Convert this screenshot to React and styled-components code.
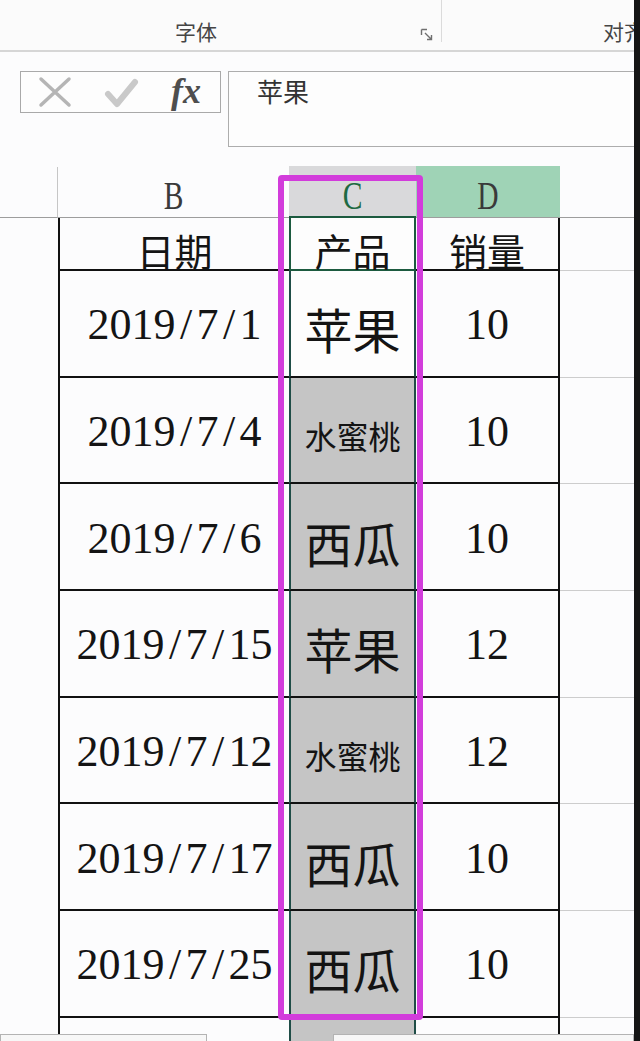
import React from 'react';
import styled, { createGlobalStyle } from 'styled-components';

const GlobalStyle = createGlobalStyle`
  html, body { margin: 0; padding: 0; background: #fcfcfd; }
  #root { width: 640px; height: 1041px; }
`;

const Page = styled.div`
  width: 640px;
  height: 1041px;
  display: flex;
  overflow: hidden;
  position: relative;
  background: #fcfcfd;
`;

const Main = styled.div`
  width: 634px;
  height: 100%;
  display: flex;
  flex-direction: column;
  overflow: hidden;
  flex: none;
`;

const EdgeBar = styled.div`
  width: 6px;
  background: #151515;
  flex: none;
`;

/* ---------- ribbon ---------- */
const Ribbon = styled.div`
  height: 50px;
  flex: none;
  display: flex;
  border-bottom: 2px solid #d6d6d6;
  background: #fbfbfb;
`;

const RibbonGroup = styled.div`
  width: ${p => (p.$width ? `${p.$width}px` : 'auto')};
  flex: ${p => (p.$width ? 'none' : '1')};
  display: flex;
  align-items: flex-end;
  box-sizing: border-box;
  padding-bottom: 8px;
  padding-left: ${p => p.$labelOffset}px;
  overflow: hidden;
`;

const GroupLabel = styled.span`
  font-family: "Noto Sans CJK SC", sans-serif;
  font-size: 21px;
  line-height: 21px;
  color: #454545;
  white-space: nowrap;
`;

const Launcher = styled.svg`
  margin-left: auto;
  margin-right: 7px;
  margin-bottom: 0px;
  flex: none;
`;

const Separator = styled.div`
  width: 1px;
  height: 42px;
  background: #dbdbdb;
  flex: none;
`;

/* ---------- formula bar ---------- */
const FormulaBar = styled.div`
  height: 114px;
  flex: none;
  box-sizing: border-box;
  display: flex;
  align-items: flex-start;
  gap: 7px;
  padding: 19px 0 0 20px;
`;

const EditButtons = styled.div`
  width: 201px;
  height: 42px;
  box-sizing: border-box;
  border: 1px solid #a9a9a9;
  background: #fdfdfd;
  display: flex;
  align-items: center;
  gap: 32px;
  padding-left: 17px;
  flex: none;
`;

const FxLabel = styled.span`
  font-family: "Liberation Serif", serif;
  font-style: italic;
  font-weight: 700;
  font-size: 36px;
  line-height: 36px;
  color: #4e4e4e;
  margin-top: -2px;
`;

const FormulaInput = styled.div`
  flex: 1;
  height: 76px;
  box-sizing: border-box;
  border: 1px solid #adadad;
  border-right: none;
  background: #fdfdfd;
  padding: 6px 0 0 28px;
  font-family: "Noto Sans CJK SC", sans-serif;
  font-size: 26px;
  line-height: 26px;
  color: #333;
`;

/* ---------- sheet ---------- */
const Sheet = styled.div`
  position: relative;
  flex: 1;
  display: grid;
  grid-template-columns: 58px 231px 127px 144px 1fr;
  grid-template-rows: 52px 53px repeat(7, 106.7px) 1fr;
`;

const Corner = styled.div`
  box-sizing: border-box;
  border-bottom: 1px solid #9d9d9d;
  border-right: 1px solid #c6c6c6;
  margin-top: 1px;
`;

const ColHeader = styled.div`
  box-sizing: border-box;
  display: flex;
  align-items: center;
  justify-content: center;
  padding-top: 8px;
  background: ${p => p.$bg || 'transparent'};
  border-bottom: 1px solid #9d9d9d;
  font-family: "Liberation Serif", serif;
  font-size: 41px;
  line-height: 41px;
  color: ${p => p.$color || '#3a3a3a'};
`;

const ColLetter = styled.span`
  display: inline-block;
  transform: scaleX(0.72);
`;

const Cell = styled.div`
  box-sizing: border-box;
  min-width: 0;
  display: flex;
  align-items: center;
  justify-content: center;
  padding-top: ${p => p.$nudge || 0}px;
  border-bottom: ${p => (p.$open ? 'none' : '2px solid #111')};
`;

const Gutter = styled.div``;

const DateCell = styled(Cell)`
  border-left: 2px solid #111;
`;

const ProductCell = styled(Cell)`
  background: ${p => (p.$shaded ? '#c5c5c5' : '#fdfdfd')};
  border-left: 2px solid #1f4d47;
  border-right: 2px solid #1f4d47;
  ${p =>
    p.$active &&
    `
    border: 2px solid #1c5a3f;
    margin-top: -2px;
  `}
`;

const QtyCell = styled(Cell)`
  border-right: 2px solid #111;
`;

const Blank = styled.div`
  box-sizing: border-box;
  border-bottom: ${p => (p.$open ? 'none' : '1px solid #cdcdcd')};
`;

const Num = styled.span`
  font-family: "Liberation Serif", serif;
  font-size: 44px;
  line-height: 44px;
  color: #141414;
  white-space: nowrap;
`;

const Slash = styled.span`
  display: inline-block;
  width: 21px;
  text-align: center;
`;

const CJK = styled.span`
  font-family: "Noto Sans CJK SC", sans-serif;
  font-size: ${p => p.$size}px;
  line-height: ${p => p.$size}px;
  color: #141414;
  white-space: nowrap;
`;

const SelectionFrame = styled.div`
  position: absolute;
  left: 278px;
  top: 9px;
  width: 145px;
  height: 845px;
  box-sizing: border-box;
  border: 6px solid #d23cdb;
  border-radius: 4px;
  pointer-events: none;
`;

const SheetTabs = styled.div`
  position: absolute;
  left: 0;
  right: 6px;
  bottom: 0;
  height: 7px;
  display: flex;
  justify-content: space-between;
  pointer-events: none;
`;

const TabBlock = styled.div`
  width: ${p => p.$w}px;
  height: 100%;
  box-sizing: border-box;
  background: #f7f7f7;
  border: 1px solid #b3b3b3;
  border-bottom: none;
`;

/* ---------- data ---------- */
const rows = [
  { date: '2019/7/1', product: '苹果', qty: '10' },
  { date: '2019/7/4', product: '水蜜桃', qty: '10' },
  { date: '2019/7/6', product: '西瓜', qty: '10' },
  { date: '2019/7/15', product: '苹果', qty: '12' },
  { date: '2019/7/12', product: '水蜜桃', qty: '12' },
  { date: '2019/7/17', product: '西瓜', qty: '10' },
  { date: '2019/7/25', product: '西瓜', qty: '10' },
];

function DateText({ value }) {
  const parts = value.split('/');
  return (
    <Num>
      {parts.map((p, i) => (
        <React.Fragment key={i}>
          {i > 0 && <Slash>/</Slash>}
          {p}
        </React.Fragment>
      ))}
    </Num>
  );
}

const CloseIcon = () => (
  <svg width="34" height="32" viewBox="0 0 34 32">
    <path d="M3 3 L31 29 M31 3 L3 29" stroke="#b5b5b5" strokeWidth="3.5" strokeLinecap="round" fill="none" />
  </svg>
);

const CheckIcon = () => (
  <svg width="35" height="32" viewBox="0 0 35 32">
    <polyline points="4,18 13,28 31,6" stroke="#c9c9c9" strokeWidth="6" strokeLinecap="round" strokeLinejoin="round" fill="none" />
  </svg>
);

export default function App() {
  return (
    <>
      <GlobalStyle />
      <Page>
        <Main>
          <Ribbon>
            <RibbonGroup $width={441} $labelOffset={175}>
              <GroupLabel>字体</GroupLabel>
              <Launcher width="14" height="14" viewBox="0 0 14 14">
                <path d="M1.5 1.5 H7 M1.5 1.5 V7" stroke="#6f6f6f" strokeWidth="1.4" fill="none" />
                <path d="M5 5 L11.5 11.5 M11.5 7 V11.5 H7" stroke="#6f6f6f" strokeWidth="1.4" fill="none" />
              </Launcher>
            </RibbonGroup>
            <Separator />
            <RibbonGroup $labelOffset={161}>
              <GroupLabel>对齐</GroupLabel>
            </RibbonGroup>
          </Ribbon>

          <FormulaBar>
            <EditButtons>
              <CloseIcon />
              <CheckIcon />
              <FxLabel>fx</FxLabel>
            </EditButtons>
            <FormulaInput>苹果</FormulaInput>
          </FormulaBar>

          <Sheet>
            <Corner />
            <ColHeader><ColLetter>B</ColLetter></ColHeader>
            <ColHeader $bg="#d9d9db" $color="#1e6a43"><ColLetter>C</ColLetter></ColHeader>
            <ColHeader $bg="#9fd3b6" $color="#3a3a3a"><ColLetter>D</ColLetter></ColHeader>
            <ColHeader />

            <Gutter />
            <DateCell $nudge={12}><CJK $size={38}>日期</CJK></DateCell>
            <ProductCell $active $nudge={12}><CJK $size={38}>产品</CJK></ProductCell>
            <QtyCell $nudge={12}><CJK $size={38}>销量</CJK></QtyCell>
            <Blank />

            {rows.map((r, i) => (
              <React.Fragment key={i}>
                <Gutter />
                <DateCell $nudge={4}><DateText value={r.date} /></DateCell>
                <ProductCell $shaded={i > 0} $nudge={10}>
                  <CJK $size={r.product.length > 2 ? 32 : 48}>{r.product}</CJK>
                </ProductCell>
                <QtyCell $nudge={4}><Num>{r.qty}</Num></QtyCell>
                <Blank />
              </React.Fragment>
            ))}

            <Gutter />
            <DateCell $open />
            <ProductCell $open $shaded />
            <QtyCell $open />
            <Blank $open />

            <SelectionFrame />
          </Sheet>
        </Main>
        <EdgeBar />
        <SheetTabs>
          <TabBlock $w={207} />
          <TabBlock $w={301} />
        </SheetTabs>
      </Page>
    </>
  );
}
